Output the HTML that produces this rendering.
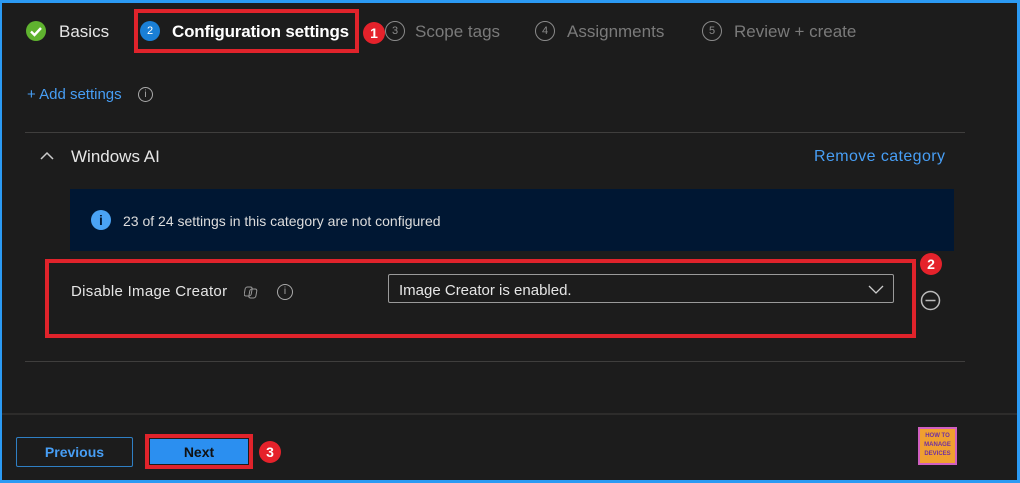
<!DOCTYPE html>
<html><head><style>
body{margin:0;width:1020px;height:483px;overflow:hidden;background:#2b9af3;font-family:"Liberation Sans",sans-serif;}
#f{position:absolute;left:2px;top:3px;width:1015px;height:477px;background:#1c1c1c;}
.a{position:absolute;}
.t{font-size:17px;color:#7a7a7a;top:22px;}
.c{border:1px solid #8a8a8a;border-radius:50%;width:18px;height:18px;color:#8a8a8a;font-size:11px;text-align:center;line-height:18px;}
.badge{background:#e5222b;color:#fff;border-radius:50%;width:22px;height:22px;font-size:14px;font-weight:bold;text-align:center;line-height:22px;}
.red{border:4px solid #e0232b;box-sizing:border-box;}
.line{height:1px;background:#3f3e3d;}
</style></head><body>
<div id="f"></div>
<div class="a" style="left:26px;top:21px;width:20px;height:20px;border-radius:50%;background:#5fb32f;"><svg width="20" height="20"><path d="M5 10.5l3.5 3.5 6.5-7" stroke="#fff" stroke-width="2.4" fill="none"/></svg></div>
<div class="a t" style="left:59px;color:#e6e6e6;">Basics</div>
<div class="a red" style="left:134px;top:9px;width:225px;height:44px;"></div>
<div class="a" style="left:140px;top:21px;width:20px;height:20px;border-radius:50%;background:#1a7fd6;color:#fff;font-size:11px;text-align:center;line-height:20px;">2</div>
<div class="a t" style="left:172px;color:#fff;font-weight:bold;letter-spacing:-0.2px;">Configuration settings</div>
<div class="a badge" style="left:363px;top:22px;">1</div>
<div class="a c" style="left:385px;top:21px;">3</div>
<div class="a t" style="left:415px;">Scope tags</div>
<div class="a c" style="left:535px;top:21px;">4</div>
<div class="a t" style="left:567px;">Assignments</div>
<div class="a c" style="left:702px;top:21px;">5</div>
<div class="a t" style="left:734px;">Review + create</div>
<div class="a" style="left:27px;top:86px;color:#479ef5;font-size:15px;">+ Add settings</div>
<div class="a c" style="left:138px;top:87px;width:13px;height:13px;line-height:13px;font-size:10px;color:#aaa;border-color:#aaa;">i</div>
<div class="a line" style="left:25px;top:132px;width:940px;"></div>
<svg class="a" style="left:39px;top:150px" width="16" height="12"><path d="M2 9l6-6 6 6" stroke="#ccc" stroke-width="1.5" fill="none"/></svg>
<div class="a" style="left:71px;top:147px;color:#e6e6e6;font-size:17px;">Windows AI</div>
<div class="a" style="left:814px;top:148px;color:#479ef5;font-size:16px;letter-spacing:0.4px;">Remove category</div>
<div class="a" style="left:70px;top:189px;width:884px;height:62px;background:#001733;"></div>
<div class="a" style="left:91px;top:210px;width:20px;height:20px;border-radius:50%;background:#4aa3f5;color:#001733;font-weight:bold;font-size:14px;text-align:center;line-height:20px;">i</div>
<div class="a" style="left:123px;top:213px;color:#ddd;font-size:14px;">23 of 24 settings in this category are not configured</div>
<div class="a red" style="left:45px;top:259px;width:871px;height:79px;"></div>
<div class="a badge" style="left:920px;top:253px;">2</div>
<div class="a" style="left:71px;top:283px;color:#e6e6e6;font-size:15px;letter-spacing:0.3px;">Disable Image Creator</div>
<svg class="a" style="left:244px;top:284px" width="16" height="16"><rect x="2" y="3" width="7" height="9" rx="2" transform="skewX(-10)" stroke="#999" fill="none"/><rect x="7" y="5" width="7" height="9" rx="2" transform="skewX(-10)" stroke="#999" fill="none"/></svg>
<div class="a c" style="left:277px;top:284px;width:14px;height:14px;line-height:14px;font-size:10px;color:#aaa;border-color:#aaa;">i</div>
<div class="a" style="left:388px;top:274px;width:506px;height:29px;border:1px solid #9a9a9a;border-radius:2px;box-sizing:border-box;"></div>
<div class="a" style="left:399px;top:282px;color:#e6e6e6;font-size:15px;">Image Creator is enabled.</div>
<svg class="a" style="left:867px;top:283px" width="18" height="12"><path d="M2 3l7 7 7-7" stroke="#ccc" stroke-width="1.3" fill="none"/></svg>
<svg class="a" style="left:920px;top:290px" width="21" height="21"><circle cx="10.5" cy="10.5" r="9" stroke="#bbb" stroke-width="1.5" fill="none"/><path d="M5.5 10.5h10" stroke="#bbb" stroke-width="1.5"/></svg>
<div class="a line" style="left:25px;top:361px;width:940px;"></div>
<div class="a" style="left:2px;top:413px;width:1015px;height:2px;background:#2d2c2b;"></div>
<div class="a" style="left:16px;top:437px;width:117px;height:30px;border:1px solid #2f7fc4;border-radius:2px;box-sizing:border-box;color:#479ef5;font-weight:bold;font-size:14px;text-align:center;line-height:29px;">Previous</div>
<div class="a red" style="left:145px;top:434px;width:108px;height:35px;"></div>
<div class="a" style="left:150px;top:439px;width:98px;height:25px;background:#2b8ff0;color:#111;font-weight:bold;font-size:14px;text-align:center;line-height:27px;">Next</div>
<div class="a badge" style="left:259px;top:441px;">3</div>
<div class="a" style="left:918px;top:427px;width:39px;height:38px;background:#f0a030;border:2px solid #d060c0;box-sizing:border-box;color:#7030a0;font-size:6px;font-weight:bold;text-align:center;line-height:9px;padding-top:3px;">HOW TO<br>MANAGE<br>DEVICES</div>
</body></html>
